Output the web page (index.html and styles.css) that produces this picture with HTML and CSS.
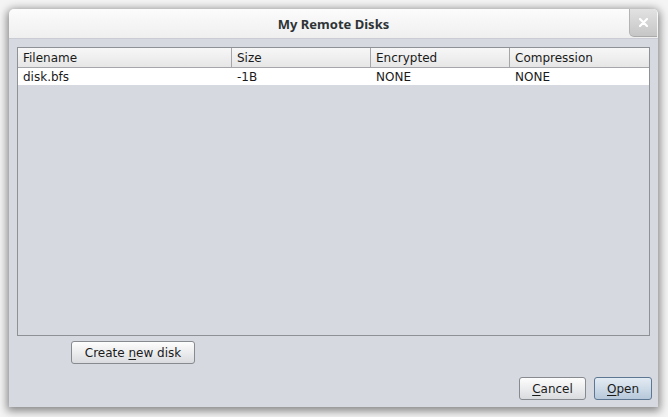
FILE: index.html
```html
<!DOCTYPE html>
<html>
<head>
<meta charset="utf-8">
<link rel="stylesheet" href="styles.css">
</head>
<body>
<div class="window">
  <div class="titlebar">
    <span class="title">My Remote Disks</span>
    <div class="close">
      <svg width="9" height="9" viewBox="0 0 9 9"><path d="M1 1 L8 8 M8 1 L1 8" stroke="#ffffff" stroke-width="2.2" stroke-linecap="round" fill="none"/></svg>
    </div>
  </div>
  <div class="content">
    <div class="table">
      <div class="row head">
        <div class="cell">Filename</div>
        <div class="cell">Size</div>
        <div class="cell">Encrypted</div>
        <div class="cell last">Compression</div>
      </div>
      <div class="row data">
        <div class="cell">disk.bfs</div>
        <div class="cell">-1B</div>
        <div class="cell">NONE</div>
        <div class="cell">NONE</div>
      </div>
    </div>
    <div class="create-row">
      <button class="btn create"><span>Create <u>n</u>ew disk</span></button>
    </div>
    <div class="actions">
      <button class="btn cancel"><span><u>C</u>ancel</span></button>
      <button class="btn open"><span><u>O</u>pen</span></button>
    </div>
  </div>
</div>
</body>
</html>
```

FILE: styles.css
```css
html, body {
  margin: 0;
  padding: 0;
}
body {
  width: 668px;
  height: 417px;
  background: #f4f4f4;
  overflow: hidden;
  font-family: "DejaVu Sans", sans-serif;
  font-size: 12px;
  color: #1a1a1a;
}
.window {
  position: relative;
  margin: 9px 0 0 9px;
  width: 649px;
  height: 398px;
  background: #d6d9df;
  border-radius: 5px 5px 0 0;
  box-shadow: 0 2px 8px 2px rgba(0,0,0,0.45);
  display: flex;
  flex-direction: column;
}
.titlebar {
  position: relative;
  height: 29px;
  display: flex;
  align-items: center;
  justify-content: center;
  background: linear-gradient(#fcfcfc, #efefef);
  border-radius: 5px 5px 0 0;
  border-bottom: 1px solid #c9ccd2;
}
.title {
  font-family: "Noto Sans", sans-serif;
  font-weight: 700;
  font-size: 13px;
  color: #2e3436;
  margin-top: 1px;
}
.close {
  position: absolute;
  top: 0;
  right: 1px;
  width: 27px;
  height: 27px;
  background: linear-gradient(#e2e2e2, #c6c6c6);
  border-left: 1px solid #b4b4b4;
  border-bottom: 1px solid #aaaaaa;
  border-radius: 0 4px 0 5px;
  display: flex;
  align-items: center;
  justify-content: center;
}
.content {
  flex: 1;
  display: flex;
  flex-direction: column;
  padding: 8px 8px 0 8px;
}
.table {
  height: 287px;
  border: 1px solid #8e9196;
  background: #d6d9df;
}
.row {
  display: grid;
  grid-template-columns: 214px 139px 139px 1fr;
}
.head {
  height: 19px;
  background: linear-gradient(#f7f7f7, #e6e6e6);
  border-bottom: 1px solid #a4a6aa;
}
.head .cell {
  border-right: 1px solid #a4a6aa;
  line-height: 19px;
  padding: 1px 0 0 5px;
  height: 18px;
}
.head .cell.last {
  border-right: none;
}
.data {
  height: 17px;
  background: #ffffff;
}
.data .cell {
  line-height: 17px;
  padding: 1px 0 0 5px;
  height: 16px;
}
.cell {
  white-space: nowrap;
  overflow: hidden;
}
.create-row {
  padding: 5px 0 0 54px;
  display: flex;
}
.btn {
  font-family: "DejaVu Sans", sans-serif;
  font-size: 12px;
  color: #1a1a1a;
  height: 23px;
  border: 1px solid #878a8f;
  border-radius: 3px;
  background: linear-gradient(#fdfdfd, #e8e9eb 60%, #d9dbde);
  padding: 0;
  display: flex;
  align-items: center;
  justify-content: center;
  white-space: pre;
}
.btn u {
  text-underline-offset: 2px;
}
.create {
  width: 124px;
}
.actions {
  margin-top: 13px;
  display: flex;
  justify-content: flex-end;
  gap: 8px;
  margin-right: -2px;
}
.cancel {
  width: 67px;
}
.open {
  width: 58px;
  border-color: #5d7793;
  background: linear-gradient(#e3ebf3, #c9d7e5 60%, #b6c8da);
}
```
